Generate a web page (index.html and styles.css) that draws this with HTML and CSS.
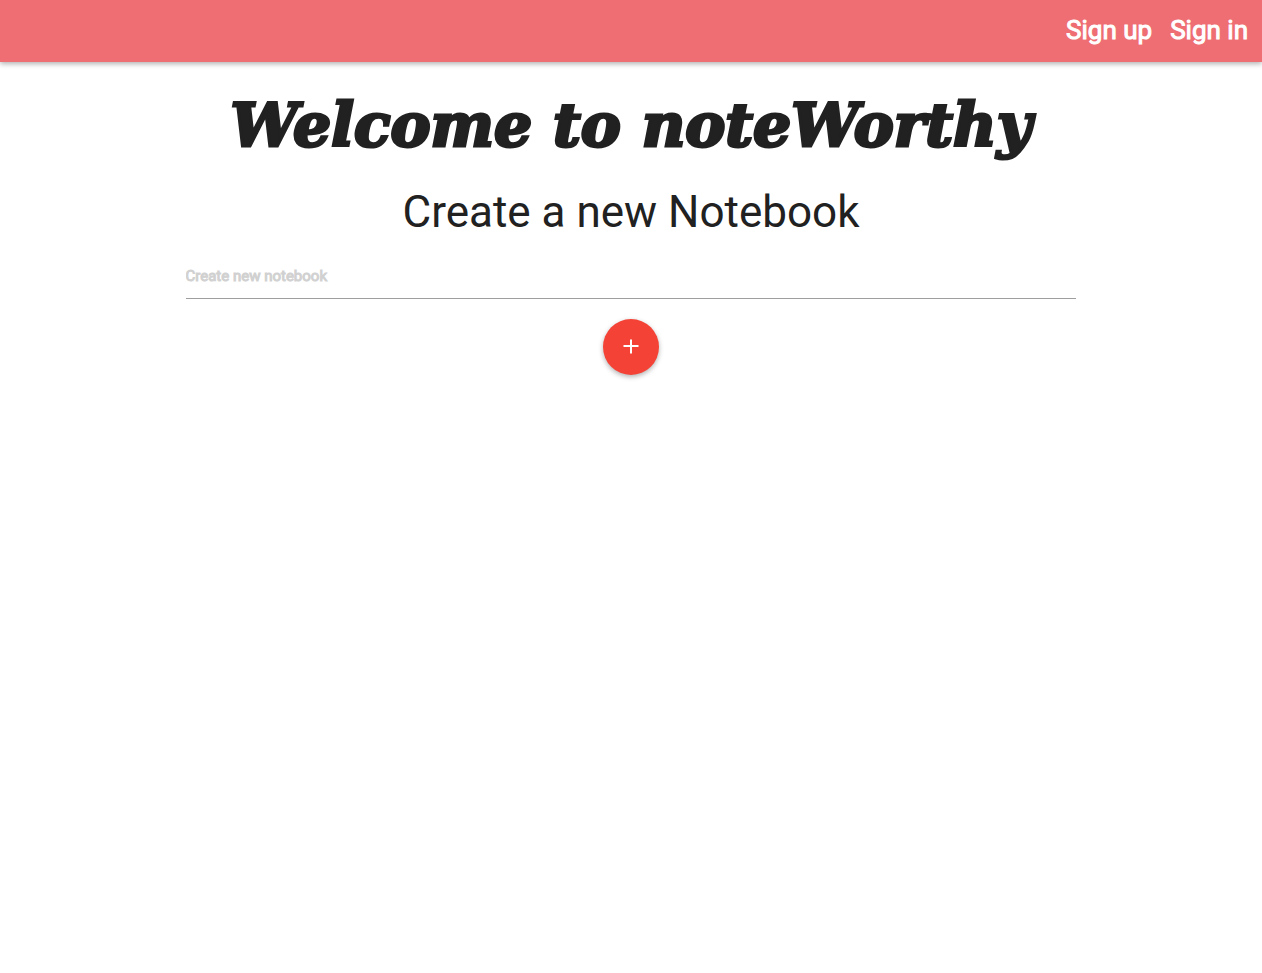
FILE: index.html
```html
<!DOCTYPE html>
<html lang="en">
<head>
<meta charset="utf-8">
<meta name="viewport" content="width=device-width, initial-scale=1">
<title>noteWorthy</title>
<link rel="stylesheet" href="styles.css">
</head>
<body>
<header class="navbar">
  <nav class="nav-links">
    <a href="#signup">Sign up</a>
    <a href="#signin">Sign in</a>
  </nav>
</header>
<main class="container">
  <h1 class="title">Welcome to noteWorthy</h1>
  <h2 class="subtitle">Create a new Notebook</h2>
  <form class="notebook-form">
    <input class="notebook-input" type="text" placeholder="Create new notebook" aria-label="Create new notebook">
    <button class="add-button" type="submit" aria-label="Add notebook">
      <svg class="add-icon" viewBox="0 0 24 24" aria-hidden="true"><path d="M19.5 12h-6.5v6.5h-2V12H4.500v-2h6.500V4.500h2V10h6.500z"/></svg>
    </button>
  </form>
</main>
</body>
</html>
```
FILE: styles.css
```css
* { box-sizing: border-box; }
body {
  margin: 0;
  background: #fff;
  color: #212121;
  font-family: Roboto, sans-serif;
}
.navbar {
  display: flex;
  justify-content: flex-end;
  height: 62px;
  padding: 0 14px;
  background: #ee6e73;
  box-shadow: 0 2px 5px rgba(0, 0, 0, .3);
}
.nav-links {
  display: flex;
  gap: 18px;
}
.nav-links a {
  color: #fff;
  font-size: 26px;
  font-weight: 400;
  line-height: 60px;
  text-decoration: none;
  -webkit-text-stroke: 1px #fff;
}
.container {
  width: 70.6%;
  margin: 0 auto;
  padding: 24px 0;
  text-align: center;
}
.title {
  display: flex;
  justify-content: center;
  margin: 0;
  font-family: "DejaVu Serif", serif;
  font-size: 60px;
  font-style: italic;
  font-weight: 900;
  line-height: 78px;
  white-space: nowrap;
  -webkit-text-stroke: 3px #212121;
}
.subtitle {
  margin: 26px 0 0;
  font-size: 44px;
  font-weight: 400;
  line-height: 44px;
}
.notebook-form {
  display: flex;
  flex-direction: column;
  align-items: center;
  gap: 20px;
  margin-top: 20px;
}
.notebook-input {
  width: 100%;
  height: 45px;
  padding: 0;
  border: 0;
  border-bottom: 1px solid #9e9e9e;
  outline: 0;
  background: transparent;
  font: 400 15px Roboto, sans-serif;
}
.notebook-input::placeholder {
  color: #d1d1d1;
  opacity: 1;
  -webkit-text-stroke: 1px #d1d1d1;
}
.add-button {
  display: grid;
  place-items: center;
  width: 56px;
  height: 56px;
  padding: 0;
  border: 0;
  border-radius: 50%;
  background: #f44336;
  box-shadow: 0 2px 5px rgba(0, 0, 0, .3);
  cursor: pointer;
}
.add-icon { width: 24px; height: 24px; fill: #fff; }
```
